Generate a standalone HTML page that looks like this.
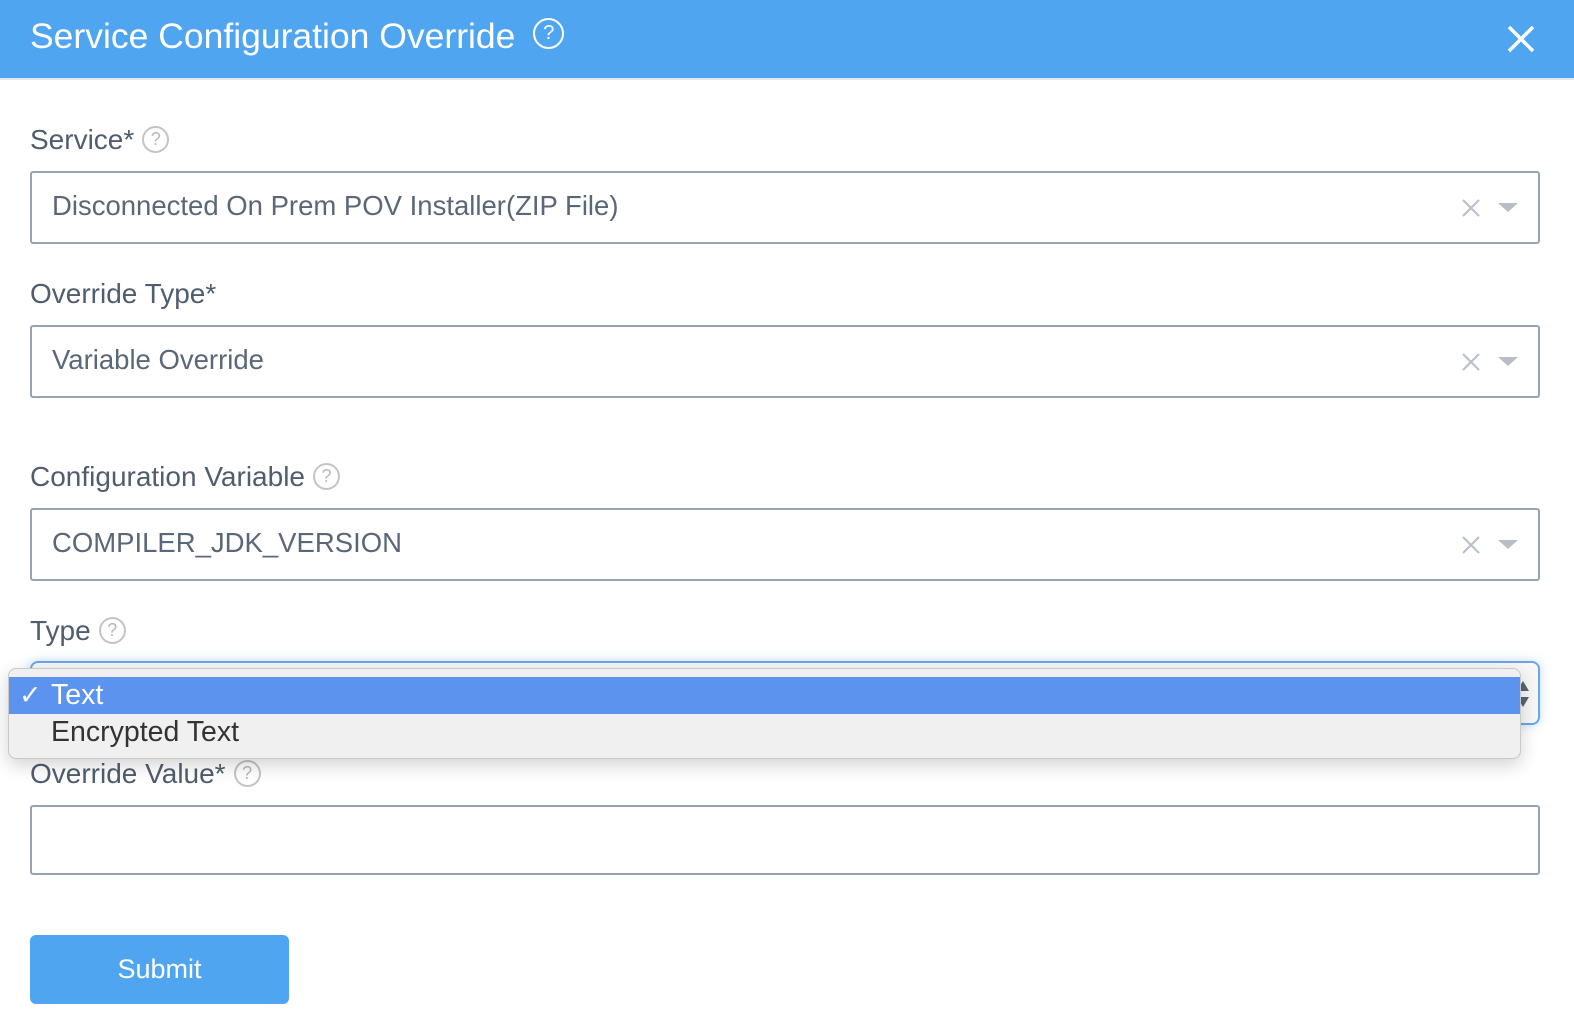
<!DOCTYPE html>
<html><head><meta charset="utf-8"><style>
*{box-sizing:border-box;margin:0;padding:0}
body{width:1574px;height:1036px;background:#fff;font-family:"Liberation Sans",sans-serif;position:relative;overflow:hidden}
.hdr{position:absolute;left:0;top:0;width:1574px;height:80px;background:#50a5f1;border-bottom:2px solid #e3e6ea}
.title{position:absolute;left:30px;top:16px;font-size:35.5px;color:#fff}
.ab{position:absolute}
.lbl{position:absolute;left:30px;font-size:28px;color:#4f5d6e}
.q{display:inline-block;width:27px;height:27px;border:2px solid #c4c4c4;border-radius:50%;color:#b8b8b8;font-size:18px;text-align:center;line-height:23px;vertical-align:middle;margin-left:8px;margin-top:-4px}
.box{position:absolute;left:30px;width:1510px;height:73px;border:2px solid #98a3b2;border-radius:3px}
.val{position:absolute;left:20px;top:17px;font-size:27.5px;color:#5a6778}
.clr{position:absolute;right:58px;top:26px}
.arr{position:absolute;right:20px;top:30px;width:0;height:0;border-left:10px solid transparent;border-right:10px solid transparent;border-top:9px solid #b8bec7}
</style></head><body>
<div class="hdr"><div class="title">Service Configuration Override <span style="display:inline-block;width:31px;height:31px;border:2.5px solid #fff;border-radius:50%;font-size:20px;text-align:center;line-height:26px;vertical-align:middle;margin-left:8px;margin-top:-10px">?</span></div>
<svg class="ab" style="left:1507px;top:25px" width="28" height="28"><path d="M2 2L26 26M26 2L2 26" stroke="#fff" stroke-width="3.5"/></svg></div>

<div class="lbl" style="top:124px">Service*<span class="q">?</span></div>
<div class="box" style="top:171px"><div class="val">Disconnected On Prem POV Installer(ZIP File)</div><svg class="clr" width="18" height="18"><path d="M1 1L17 17M17 1L1 17" stroke="#b8bec7" stroke-width="2"/></svg><div class="arr"></div></div>

<div class="lbl" style="top:278px">Override Type*</div>
<div class="box" style="top:325px"><div class="val">Variable Override</div><svg class="clr" width="18" height="18"><path d="M1 1L17 17M17 1L1 17" stroke="#b8bec7" stroke-width="2"/></svg><div class="arr"></div></div>

<div class="lbl" style="top:461px">Configuration Variable<span class="q">?</span></div>
<div class="box" style="top:508px"><div class="val">COMPILER_JDK_VERSION</div><svg class="clr" width="18" height="18"><path d="M1 1L17 17M17 1L1 17" stroke="#b8bec7" stroke-width="2"/></svg><div class="arr"></div></div>

<div class="lbl" style="top:615px">Type<span class="q">?</span></div>
<div class="ab" style="left:30px;top:661px;width:1510px;height:64px;border:2px solid #6aa6e8;border-radius:8px;box-shadow:0 0 10px rgba(80,150,230,.35);background:#f7f7f7"></div>
<svg class="ab" style="left:1516px;top:680px" width="14" height="28"><path d="M7 1L13 11H1Z" fill="#5b6370"/><path d="M7 27L13 17H1Z" fill="#5b6370"/></svg>

<div class="lbl" style="top:758px">Override Value*<span class="q">?</span></div>
<div class="box" style="top:805px;height:70px"></div>

<div class="ab" style="left:8px;top:668px;width:1513px;height:91px;background:#f0f0f0;border:1px solid #c9c9c9;border-radius:8px;box-shadow:0 6px 18px rgba(0,0,0,.18);overflow:hidden">
<div style="position:absolute;left:0;top:8px;width:100%;height:37px;background:#5b93ee"></div>
<div style="position:absolute;left:10px;top:8px;font-size:27px;color:#fff;line-height:37px">✓</div>
<div style="position:absolute;left:42px;top:8px;font-size:28.5px;color:#fff;line-height:37px">Text</div>
<div style="position:absolute;left:42px;top:45px;font-size:28.5px;color:#333;line-height:37px">Encrypted Text</div>
</div>

<div class="ab" style="left:30px;top:935px;width:259px;height:69px;background:#50a5f1;border-radius:6px;color:#fff;font-size:27px;text-align:center;line-height:69px">Submit</div>
</body></html>
